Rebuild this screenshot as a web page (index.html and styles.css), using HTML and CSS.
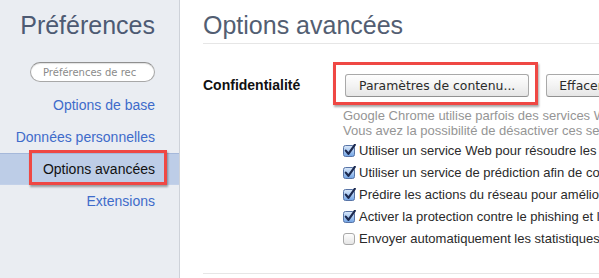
FILE: index.html
```html
<!DOCTYPE html>
<html lang="fr">
<head>
<meta charset="utf-8">
<title>Préférences - Options avancées</title>
<link rel="stylesheet" href="styles.css">
</head>
<body>
<svg class="defs" width="0" height="0" aria-hidden="true">
  <defs>
    <linearGradient id="gOn" x1="0" y1="0" x2="0" y2="1">
      <stop offset="0" stop-color="#dbe8f9"/>
      <stop offset="0.5" stop-color="#a9c9f1"/>
      <stop offset="1" stop-color="#6fa2e4"/>
    </linearGradient>
    <linearGradient id="gOff" x1="0" y1="0" x2="0" y2="1">
      <stop offset="0" stop-color="#ffffff"/>
      <stop offset="1" stop-color="#e4e4e4"/>
    </linearGradient>
    <symbol id="cbOn" viewBox="0 0 13 13">
      <rect x="0.5" y="1.5" width="11" height="11" rx="2" fill="url(#gOn)" stroke="#5874a6"/>
      <path d="M2.8 6.6 L5.4 9.8 L11.8 0.8" fill="none" stroke="#1c2a50" stroke-width="2.2" stroke-linecap="round" stroke-linejoin="round"/>
    </symbol>
    <symbol id="cbOff" viewBox="0 0 13 13">
      <rect x="0.5" y="1.5" width="11" height="11" rx="2.5" fill="url(#gOff)" stroke="#a9a9a9"/>
    </symbol>
  </defs>
</svg>
<div class="page">
  <aside class="sidebar">
    <h1 class="side-title">Préférences</h1>
    <div class="search-wrap">
      <input class="search" type="text" placeholder="Préférences de rec">
    </div>
    <nav class="nav">
      <a class="nav-item">Options de base</a>
      <a class="nav-item">Données personnelles</a>
      <a class="nav-item selected">Options avancées<span class="callout side-callout"></span></a>
      <a class="nav-item">Extensions</a>
    </nav>
  </aside>
  <main class="main">
    <h2 class="main-title">Options avancées</h2>
    <section class="section">
      <div class="label">Confidentialité</div>
      <div class="content">
        <div class="buttons">
          <span class="btn-wrap">
            <button class="btn btn-first">Paramètres de contenu...</button>
            <span class="callout btn-callout"></span>
          </span>
          <button class="btn btn-second">Effacer les données de navigation...</button>
        </div>
        <p class="desc">Google Chrome utilise parfois des services Web pour améliorer votre confort de navigation.<br>Vous avez la possibilité de désactiver ces services.</p>
        <ul class="checks">
          <li class="check"><svg class="cb" width="13" height="13"><use href="#cbOn"/></svg><span>Utiliser un service Web pour résoudre les erreurs de navigation</span></li>
          <li class="check"><svg class="cb" width="13" height="13"><use href="#cbOn"/></svg><span>Utiliser un service de prédiction afin de compléter les recherches</span></li>
          <li class="check"><svg class="cb" width="13" height="13"><use href="#cbOn"/></svg><span>Prédire les actions du réseau pour améliorer les performances</span></li>
          <li class="check"><svg class="cb" width="13" height="13"><use href="#cbOn"/></svg><span>Activer la protection contre le phishing et les logiciels malveillants</span></li>
          <li class="check"><svg class="cb" width="13" height="13"><use href="#cbOff"/></svg><span>Envoyer automatiquement les statistiques d'utilisation</span></li>
        </ul>
      </div>
    </section>
  </main>
</div>
</body>
</html>
```
FILE: styles.css
```css
* { box-sizing: border-box; }

html, body {
  margin: 0;
  padding: 0;
  background: #ffffff;
}

.defs { position: absolute; width: 0; height: 0; }

.page {
  display: flex;
  width: 599px;
  height: 278px;
  overflow: hidden;
  font-family: "Liberation Sans", Arial, sans-serif;
}

.sidebar {
  flex: 0 0 180px;
  width: 180px;
  background: #eaedf2;
  border-right: 1px solid #ced2d9;
}

.side-title {
  margin: 10px 0 0;
  padding-right: 24px;
  font-size: 25px;
  line-height: 30px;
  font-weight: normal;
  color: #4d5a73;
  text-align: right;
}

.search-wrap {
  display: flex;
  justify-content: flex-end;
  padding-right: 24px;
  margin-top: 22px;
}

.search {
  width: 125px;
  height: 20px;
  border: 1px solid #a8a8a8;
  border-top-color: #8f8f8f;
  border-radius: 10px;
  background: #ffffff;
  box-shadow: inset 0 1px 1px rgba(0,0,0,0.12);
  padding: 0 0 0 12px;
  font-family: "DejaVu Sans", sans-serif;
  font-size: 10px;
  color: #333;
  outline: none;
}
.search::placeholder { color: #8a8a8a; }

.nav {
  display: flex;
  flex-direction: column;
  margin-top: 7px;
}

.nav-item {
  position: relative;
  display: block;
  height: 32px;
  line-height: 32px;
  padding-right: 24px;
  text-align: right;
  font-size: 14px;
  color: #3e6bca;
  white-space: nowrap;
}

.nav-item.selected {
  background: #bdcde7;
  border-top: 1px solid #a5b8da;
  border-bottom: 1px solid #c3d1e9;
  line-height: 30px;
  color: #111111;
}

.callout {
  position: absolute;
  border: 3px solid #ef4844;
  box-shadow: 1px 2px 2px rgba(0,0,0,0.35);
  pointer-events: none;
}

.side-callout {
  left: 29px;
  top: -4px;
  width: 138px;
  height: 35px;
}

.main {
  flex: 1 1 auto;
  min-width: 0;
  overflow: hidden;
  padding-left: 23px;
  white-space: nowrap;
}

.main-title {
  margin: 10px 0 0;
  padding-bottom: 3px;
  border-bottom: 1px solid #e6e6e6;
  font-size: 25px;
  line-height: 30px;
  font-weight: normal;
  color: #535e72;
}

.section {
  display: flex;
  padding-top: 30px;
  padding-bottom: 23px;
  border-bottom: 1px solid #e6e6e6;
}

.label {
  flex: 0 0 140px;
  font-size: 14px;
  font-weight: bold;
  line-height: 23px;
  color: #111111;
}

.content {
  flex: 1 0 auto;
}

.buttons {
  display: flex;
  height: 23px;
}

.btn-wrap {
  position: relative;
  display: inline-flex;
  margin-left: 2px;
}

.btn {
  height: 23px;
  padding: 0 13px;
  border: 1px solid #a9a9a9;
  border-bottom-color: #919191;
  border-radius: 3px;
  background: linear-gradient(#fefefe, #f3f3f3 50%, #e6e6e6);
  font-family: "DejaVu Sans", sans-serif;
  font-size: 12.4px;
  color: #2b2b2b;
  white-space: nowrap;
}

.btn-second {
  margin-left: 17px;
  padding-left: 12px;
  flex: 0 0 auto;
}

.btn-callout {
  left: -12px;
  top: -12px;
  width: 205px;
  height: 43px;
}

.desc {
  margin: 11px 0 0;
  font-size: 13px;
  line-height: 15px;
  color: #959595;
}

.checks {
  list-style: none;
  margin: 2px 0 0;
  padding: 0;
}

.check {
  display: flex;
  align-items: center;
  height: 22px;
  font-size: 13px;
  line-height: 22px;
  color: #2a2a2a;
}

.cb {
  flex: 0 0 13px;
  margin-right: 3px;
  margin-top: -1px;
}
```
